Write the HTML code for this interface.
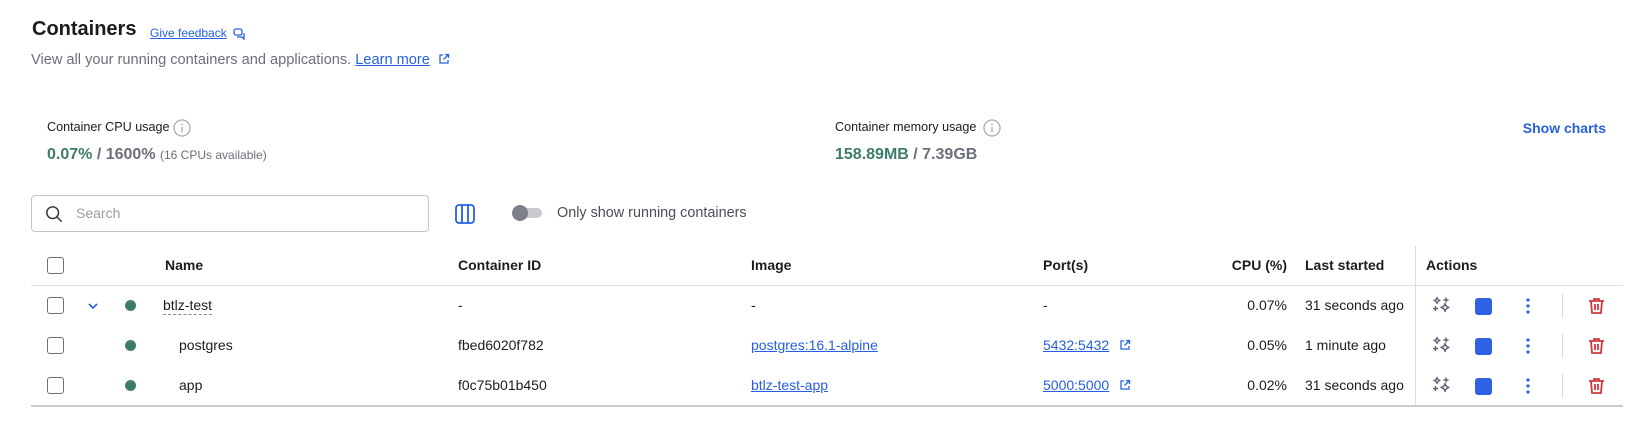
<!DOCTYPE html>
<html><head><meta charset="utf-8"><style>
*{margin:0;padding:0;box-sizing:border-box}
body{width:1644px;height:426px;background:#fff;font-family:"Liberation Sans",sans-serif;color:#1c1c1f;position:relative;overflow:hidden;font-size:14px}
.a{position:absolute;white-space:nowrap}
.lnk{color:#2660e0;text-decoration:underline}
.h{font-weight:bold;font-size:14px;top:257px}
.cb{position:absolute;left:47px;width:17px;height:17px;border:1.6px solid #6e7080;border-radius:3px}
.dot{position:absolute;left:125px;width:11px;height:11px;border-radius:50%;background:#3e7b6b}
.line{position:absolute;left:31px;width:1592px;height:1px;background:#dcdde0}
.muted{color:#6b6f7b}
</style></head><body>
<div class="a" style="left:32px;top:18px;font-size:20px;font-weight:bold">Containers</div>
<div class="a lnk" style="left:150px;top:26px;font-size:12px">Give feedback</div>
<svg class="a" style="left:233px;top:28px" width="12" height="12" viewBox="0 0 12 12" fill="none" stroke="#2660e0" stroke-width="1.3"><rect x="1" y="1" width="8" height="6" rx="2"/><path d="M4 9h5l2 2V5"/></svg>
<div class="a muted" style="left:31px;top:52px;font-size:14.6px">View all your running containers and applications. <span class="lnk">Learn more</span>
<svg style="vertical-align:-1px;margin-left:4px" width="12" height="12" viewBox="0 0 12 12" fill="none" stroke="#2660e0" stroke-width="1.3"><path d="M5 2H2v8h8V7M7 1.5h3.5V5M10.5 1.5L5.5 6.5"/></svg></div>

<div class="a" style="left:47px;top:120px;font-size:12.6px">Container CPU usage</div>
<svg class="a" style="left:173px;top:119px" width="18" height="18" viewBox="0 0 18 18"><circle cx="9" cy="9" r="8" fill="none" stroke="#aaa" stroke-width="1.3"/><rect x="8.3" y="8" width="1.4" height="5" fill="#aaa"/><circle cx="9" cy="5.5" r="0.9" fill="#aaa"/></svg>
<div class="a" style="left:47px;top:146px;font-size:16px;font-weight:bold"><span style="color:#3e7b6b">0.07%</span> <span class="muted">/ 1600%</span> <span class="muted" style="font-weight:normal;font-size:12px">(16 CPUs available)</span></div>
<div class="a" style="left:835px;top:120px;font-size:12.6px">Container memory usage</div>
<svg class="a" style="left:983px;top:119px" width="18" height="18" viewBox="0 0 18 18"><circle cx="9" cy="9" r="8" fill="none" stroke="#aaa" stroke-width="1.3"/><rect x="8.3" y="8" width="1.4" height="5" fill="#aaa"/><circle cx="9" cy="5.5" r="0.9" fill="#aaa"/></svg>
<div class="a" style="left:835px;top:146px;font-size:16px;font-weight:bold"><span style="color:#3e7b6b">158.89MB</span> <span class="muted">/ 7.39GB</span></div>
<div class="a" style="right:38px;top:120px;font-size:14px;font-weight:bold;color:#2660e0">Show charts</div>

<div class="a" style="left:31px;top:195px;width:398px;height:37px;border:1px solid #c4c6cc;border-radius:4px"></div>
<svg class="a" style="left:45px;top:205px" width="18" height="18" viewBox="0 0 20 20" fill="none" stroke="#333" stroke-width="1.6"><circle cx="8.5" cy="8.5" r="6.5"/><path d="M13.5 13.5l5 5"/></svg>
<div class="a" style="left:76px;top:205px;font-size:14px;color:#9a9da6">Search</div>
<svg class="a" style="left:454px;top:203px" width="22" height="22" viewBox="0 0 22 22" fill="none" stroke="#2660e0" stroke-width="1.8"><rect x="2" y="2" width="18" height="18" rx="3"/><path d="M8 2v18M14 2v18"/></svg>
<div class="a" style="left:515px;top:208px;width:27px;height:10px;border-radius:5px;background:#c8cad0"></div>
<div class="a" style="left:512px;top:205px;width:16px;height:16px;border-radius:50%;background:#7d808a"></div>
<div class="a muted" style="left:557px;top:205px;font-size:14.4px;color:#4a4d57">Only show running containers</div>

<div class="cb" style="top:257px"></div>
<div class="a h" style="left:165px">Name</div>
<div class="a h" style="left:458px">Container ID</div>
<div class="a h" style="left:751px">Image</div>
<div class="a h" style="left:1043px">Port(s)</div>
<div class="a h" style="right:357px">CPU (%)</div>
<div class="a h" style="left:1305px">Last started</div>
<div class="a h" style="left:1426px">Actions</div>
<div class="line" style="top:285px"></div>
<div class="line" style="top:405px;height:2px;background:#c9cace"></div>
<div class="a" style="left:1415px;top:246px;width:1px;height:159px;background:#dcdde0"></div>

<div class="cb" style="top:297px"></div>
<svg class="a" style="left:87px;top:302px" width="12" height="8" viewBox="0 0 12 8" fill="none" stroke="#2660e0" stroke-width="1.6"><path d="M2 2l4 4 4-4"/></svg>
<div class="dot" style="top:300px"></div>
<div class="a" style="left:163px;top:297px;border-bottom:1px dashed #888;line-height:17px">btlz-test</div>
<div class="a" style="left:458px;top:297px">-</div>
<div class="a" style="left:751px;top:297px">-</div>
<div class="a" style="left:1043px;top:297px">-</div>
<div class="a" style="right:357px;top:297px">0.07%</div>
<div class="a" style="left:1305px;top:297px">31 seconds ago</div>

<div class="cb" style="top:337px"></div>
<div class="dot" style="top:340px"></div>
<div class="a" style="left:179px;top:337px">postgres</div>
<div class="a" style="left:458px;top:337px">fbed6020f782</div>
<div class="a lnk" style="left:751px;top:337px">postgres:16.1-alpine</div>
<div class="a lnk" style="left:1043px;top:337px">5432:5432</div>
<div class="a" style="right:357px;top:337px">0.05%</div>
<div class="a" style="left:1305px;top:337px">1 minute ago</div>

<div class="cb" style="top:377px"></div>
<div class="dot" style="top:380px"></div>
<div class="a" style="left:179px;top:377px">app</div>
<div class="a" style="left:458px;top:377px">f0c75b01b450</div>
<div class="a lnk" style="left:751px;top:377px">btlz-test-app</div>
<div class="a lnk" style="left:1043px;top:377px">5000:5000</div>
<div class="a" style="right:357px;top:377px">0.02%</div>
<div class="a" style="left:1305px;top:377px">31 seconds ago</div>

<svg class="a" style="left:0;top:0" width="1644" height="426">
<defs>
<g id="sp" fill="none" stroke="#5e6170" stroke-width="1.4" stroke-linejoin="round">
<path d="M4 0.5Q4.5 3 7 3.5Q4.5 4 4 6.5Q3.5 4 1 3.5Q3.5 3 4 0.5z"/><path d="M13 0.5v5M10.5 3h5"/><path d="M2.5 9v5M0 11.5h5"/><path d="M12 6.5Q12.6 9.9 16 10.5Q12.6 11.1 12 14.5Q11.4 11.1 8 10.5Q11.4 9.9 12 6.5z"/>
</g>
<g id="tr" fill="none" stroke="#d0393e" stroke-width="1.8">
<path d="M0 3h15M5 3V1h5v2M2 3l1 12h9l1-12M6 6v6M9 6v6"/>
</g>
</defs>
<g transform="translate(1433,297)"><use href="#sp"/></g>
<g transform="translate(1433,337)"><use href="#sp"/></g>
<g transform="translate(1433,377)"><use href="#sp"/></g>
<rect x="1475" y="298" width="17" height="17" rx="3" fill="#2f62e3"/>
<rect x="1475" y="338" width="17" height="17" rx="3" fill="#2f62e3"/>
<rect x="1475" y="378" width="17" height="17" rx="3" fill="#2f62e3"/>
<g fill="#2660e0"><circle cx="1528" cy="300" r="1.6"/><circle cx="1528" cy="306" r="1.6"/><circle cx="1528" cy="312" r="1.6"/>
<circle cx="1528" cy="340" r="1.6"/><circle cx="1528" cy="346" r="1.6"/><circle cx="1528" cy="352" r="1.6"/>
<circle cx="1528" cy="380" r="1.6"/><circle cx="1528" cy="386" r="1.6"/><circle cx="1528" cy="392" r="1.6"/></g>
<g fill="#dcdde0"><rect x="1562" y="294" width="1" height="24"/><rect x="1562" y="334" width="1" height="24"/><rect x="1562" y="374" width="1" height="24"/></g>
<g transform="translate(1589,298)"><use href="#tr"/></g>
<g transform="translate(1589,338)"><use href="#tr"/></g>
<g transform="translate(1589,378)"><use href="#tr"/></g>
<g fill="none" stroke="#2660e0" stroke-width="1.3">
<path d="M1124 341h-3v8h8v-3M1126 340.5h3.5v3.5M1129.5 340.5l-5 5"/>
<path d="M1124 381h-3v8h8v-3M1126 380.5h3.5v3.5M1129.5 380.5l-5 5"/>
</g>
</svg>
</body></html>
